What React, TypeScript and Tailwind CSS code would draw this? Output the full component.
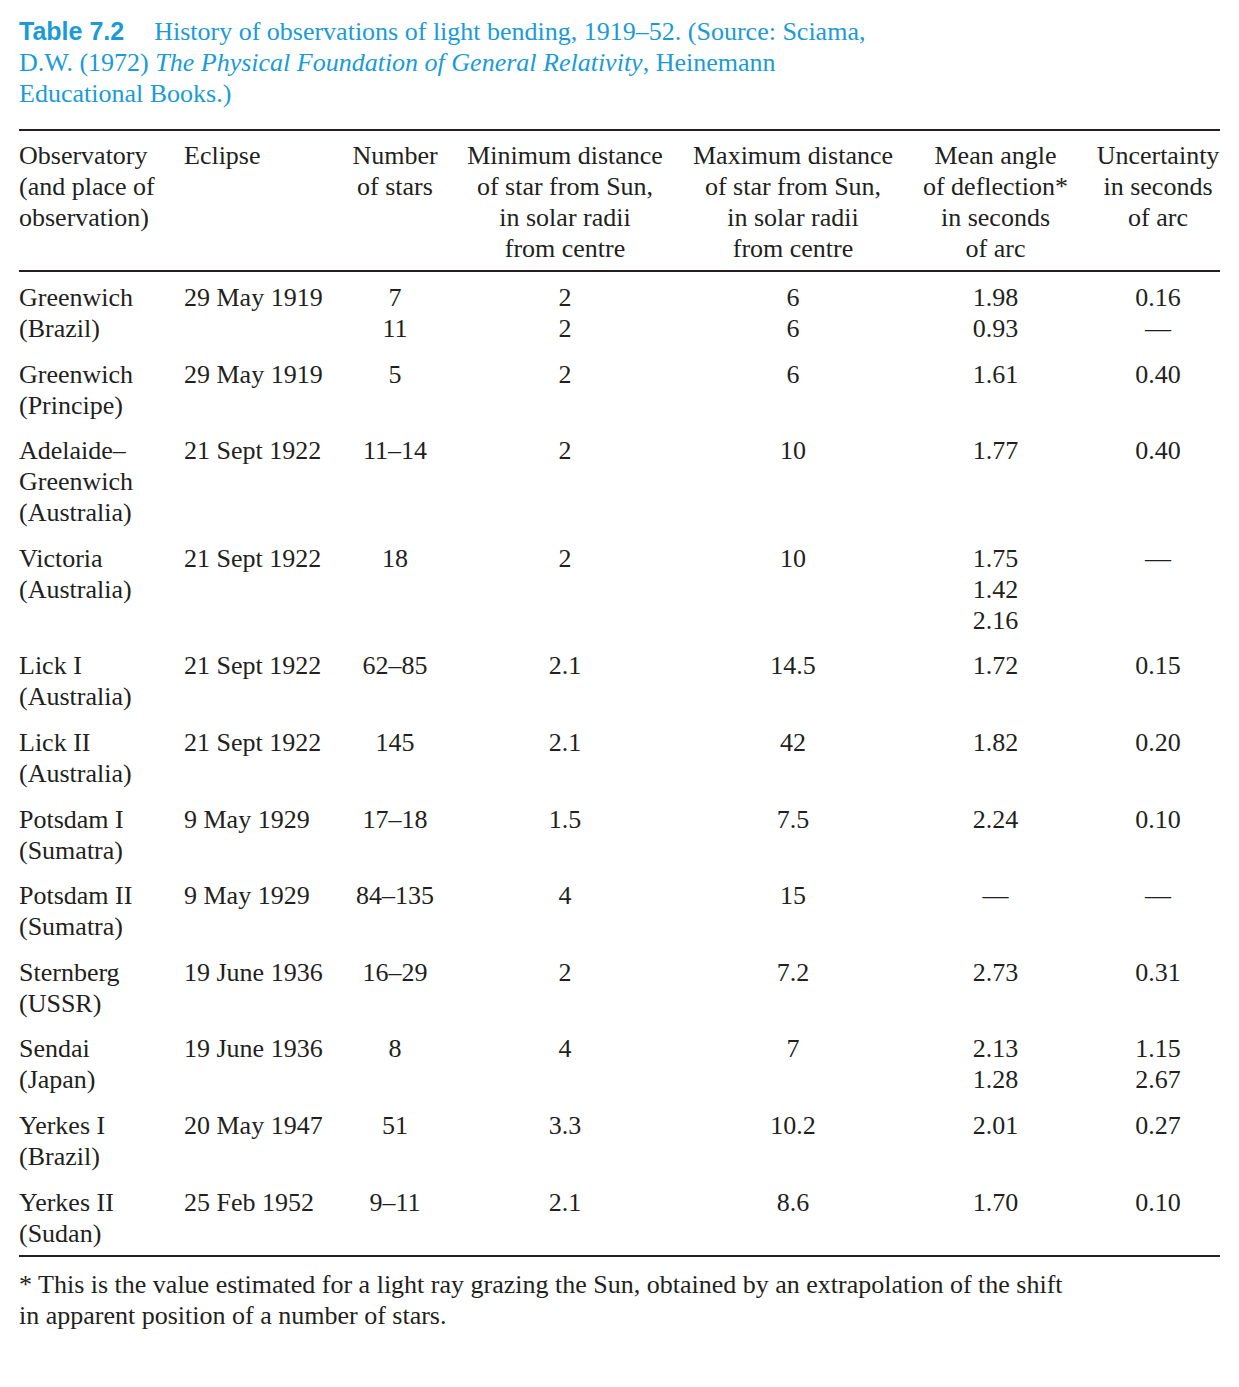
type Row = {
  obs: string[];
  eclipse: string;
  stars: string;
  min: string;
  max: string;
  mean: string[];
  unc: string[];
};

const rows: Row[] = [
  { obs: ["Greenwich", "(Brazil)"], eclipse: "29 May 1919", stars: "7\n11", min: "2\n2", max: "6\n6", mean: ["1.98", "0.93"], unc: ["0.16", "—"] },
  { obs: ["Greenwich", "(Principe)"], eclipse: "29 May 1919", stars: "5", min: "2", max: "6", mean: ["1.61"], unc: ["0.40"] },
  { obs: ["Adelaide–", "Greenwich", "(Australia)"], eclipse: "21 Sept 1922", stars: "11–14", min: "2", max: "10", mean: ["1.77"], unc: ["0.40"] },
  { obs: ["Victoria", "(Australia)"], eclipse: "21 Sept 1922", stars: "18", min: "2", max: "10", mean: ["1.75", "1.42", "2.16"], unc: ["—"] },
  { obs: ["Lick I", "(Australia)"], eclipse: "21 Sept 1922", stars: "62–85", min: "2.1", max: "14.5", mean: ["1.72"], unc: ["0.15"] },
  { obs: ["Lick II", "(Australia)"], eclipse: "21 Sept 1922", stars: "145", min: "2.1", max: "42", mean: ["1.82"], unc: ["0.20"] },
  { obs: ["Potsdam I", "(Sumatra)"], eclipse: "9 May 1929", stars: "17–18", min: "1.5", max: "7.5", mean: ["2.24"], unc: ["0.10"] },
  { obs: ["Potsdam II", "(Sumatra)"], eclipse: "9 May 1929", stars: "84–135", min: "4", max: "15", mean: ["—"], unc: ["—"] },
  { obs: ["Sternberg", "(USSR)"], eclipse: "19 June 1936", stars: "16–29", min: "2", max: "7.2", mean: ["2.73"], unc: ["0.31"] },
  { obs: ["Sendai", "(Japan)"], eclipse: "19 June 1936", stars: "8", min: "4", max: "7", mean: ["2.13", "1.28"], unc: ["1.15", "2.67"] },
  { obs: ["Yerkes I", "(Brazil)"], eclipse: "20 May 1947", stars: "51", min: "3.3", max: "10.2", mean: ["2.01"], unc: ["0.27"] },
  { obs: ["Yerkes II", "(Sudan)"], eclipse: "25 Feb 1952", stars: "9–11", min: "2.1", max: "8.6", mean: ["1.70"], unc: ["0.10"] },
];

const cols = "grid grid-cols-[165px_161px_100px_240px_216px_195px_124px]";

const Lines = ({ items }: { items: string[] }) => (
  <>
    {items.map((t, i) => (
      <div key={i}>{t}</div>
    ))}
  </>
);

export default function App() {
  return (
    <div className="w-[1239px] min-h-[1387px] bg-white pl-[19px] pt-[16px] text-[#231f20] font-['Liberation_Serif',serif] text-[26px] leading-[31px]">
      <div className="text-[#1a9bd7]">
        <span className="font-['Liberation_Sans',sans-serif] font-bold text-[25px] mr-[30px]">Table 7.2</span>
        History of observations of light bending, 1919–52. (Source: Sciama,
        <br />
        D.W. (1972) <i>The Physical Foundation of General Relativity</i>, Heinemann
        <br />
        Educational Books.)
      </div>

      <div className="w-[1201px] mt-[20px] border-t-2 border-[#231f20]">
        <div className={`${cols} pt-[9px] pb-[6px] border-b-2 border-[#231f20]`}>
          <div>Observatory<br />(and place of<br />observation)</div>
          <div>Eclipse</div>
          <div className="text-center">Number<br />of stars</div>
          <div className="text-center">Minimum distance<br />of star from Sun,<br />in solar radii<br />from centre</div>
          <div className="text-center">Maximum distance<br />of star from Sun,<br />in solar radii<br />from centre</div>
          <div className="text-center pr-[6px]">Mean angle<br />of deflection*<br />in seconds<br />of arc</div>
          <div className="text-center whitespace-nowrap">Uncertainty<br />in seconds<br />of arc</div>
        </div>

        <div className="pt-[2px] border-b-2 border-[#231f20]">
          {rows.map((r, i) => (
            <div key={i} className={`${cols} pt-[8px] pb-[6.6px]`}>
              <div><Lines items={r.obs} /></div>
              <div>{r.eclipse}</div>
              <div className="text-center"><Lines items={r.stars.split("\n")} /></div>
              <div className="text-center"><Lines items={r.min.split("\n")} /></div>
              <div className="text-center"><Lines items={r.max.split("\n")} /></div>
              <div className="text-center pr-[6px]"><Lines items={r.mean} /></div>
              <div className="text-center"><Lines items={r.unc} /></div>
            </div>
          ))}
        </div>
      </div>

      <p className="mt-[12px]">
        * This is the value estimated for a light ray grazing the Sun, obtained by an extrapolation of the shift
        <br />
        in apparent position of a number of stars.
      </p>
    </div>
  );
}
